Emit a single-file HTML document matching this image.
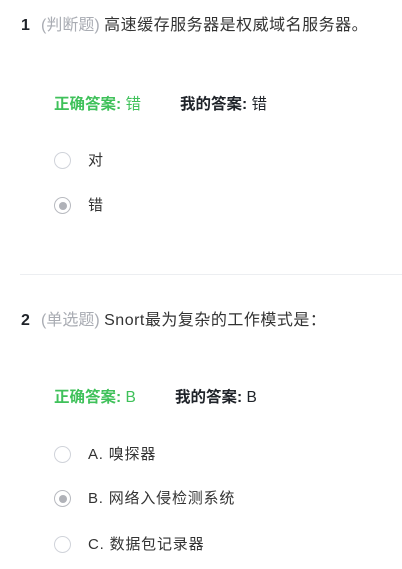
<!DOCTYPE html>
<html><head><meta charset="utf-8"><style>
body{margin:0;width:402px;height:569px;background:#fff;font-family:"Liberation Sans","Noto Sans CJK SC",sans-serif;position:relative;overflow:hidden;color:#333}
.a{position:absolute;white-space:nowrap;line-height:20px}
.num{font-weight:bold;font-size:16px;color:#1f2329}
.t{font-size:16px;color:#333}
.t span{color:#a9acb3;letter-spacing:0}
.t i{font-style:normal;letter-spacing:0.5px}
.g{font-size:15.5px;color:#3fc15a;font-weight:bold}
.g b{font-weight:normal}
.m{font-size:15.5px;color:#1f2329;font-weight:bold}
.m b{font-weight:normal}
.o{font-size:15px;color:#333;letter-spacing:0.8px}
.r{position:absolute;width:17px;height:17px;border:1px solid #d0d3da;border-radius:50%;box-sizing:border-box}
.r.s{border-color:#b8bac0}
.r.s:after{content:"";position:absolute;left:3.5px;top:3.5px;width:8px;height:8px;border-radius:50%;background:#b0b2b8}
.hr{position:absolute;left:20px;right:0;top:274px;height:1px;background:#eceef1}
</style></head><body>
<div class="a num" style="left:21px;top:16px">1</div>
<div class="a t" style="left:41px;top:16px"><span>(判断题)</span> <i>高速缓存服务器是权威域名服务器。</i></div>
<div class="a g" style="left:54px;top:95px">正确答案: <b>错</b></div>
<div class="a m" style="left:180px;top:95px">我的答案: <b>错</b></div>
<div class="r" style="left:54px;top:152px"></div>
<div class="a o" style="left:88px;top:151px">对</div>
<div class="r s" style="left:54px;top:197px"></div>
<div class="a o" style="left:88px;top:196px">错</div>
<div class="hr"></div>
<div class="a num" style="left:21px;top:311px">2</div>
<div class="a t" style="left:41px;top:311px"><span>(单选题)</span> <i>Snort最为复杂的工作模式是：</i></div>
<div class="a g" style="left:54px;top:388px">正确答案: <b>B</b></div>
<div class="a m" style="left:175px;top:388px">我的答案: <b>B</b></div>
<div class="r" style="left:54px;top:446px"></div>
<div class="a o" style="left:88px;top:445px">A. 嗅探器</div>
<div class="r s" style="left:54px;top:490px"></div>
<div class="a o" style="left:88px;top:489px">B. 网络入侵检测系统</div>
<div class="r" style="left:54px;top:536px"></div>
<div class="a o" style="left:88px;top:535px">C. 数据包记录器</div>
</body></html>
